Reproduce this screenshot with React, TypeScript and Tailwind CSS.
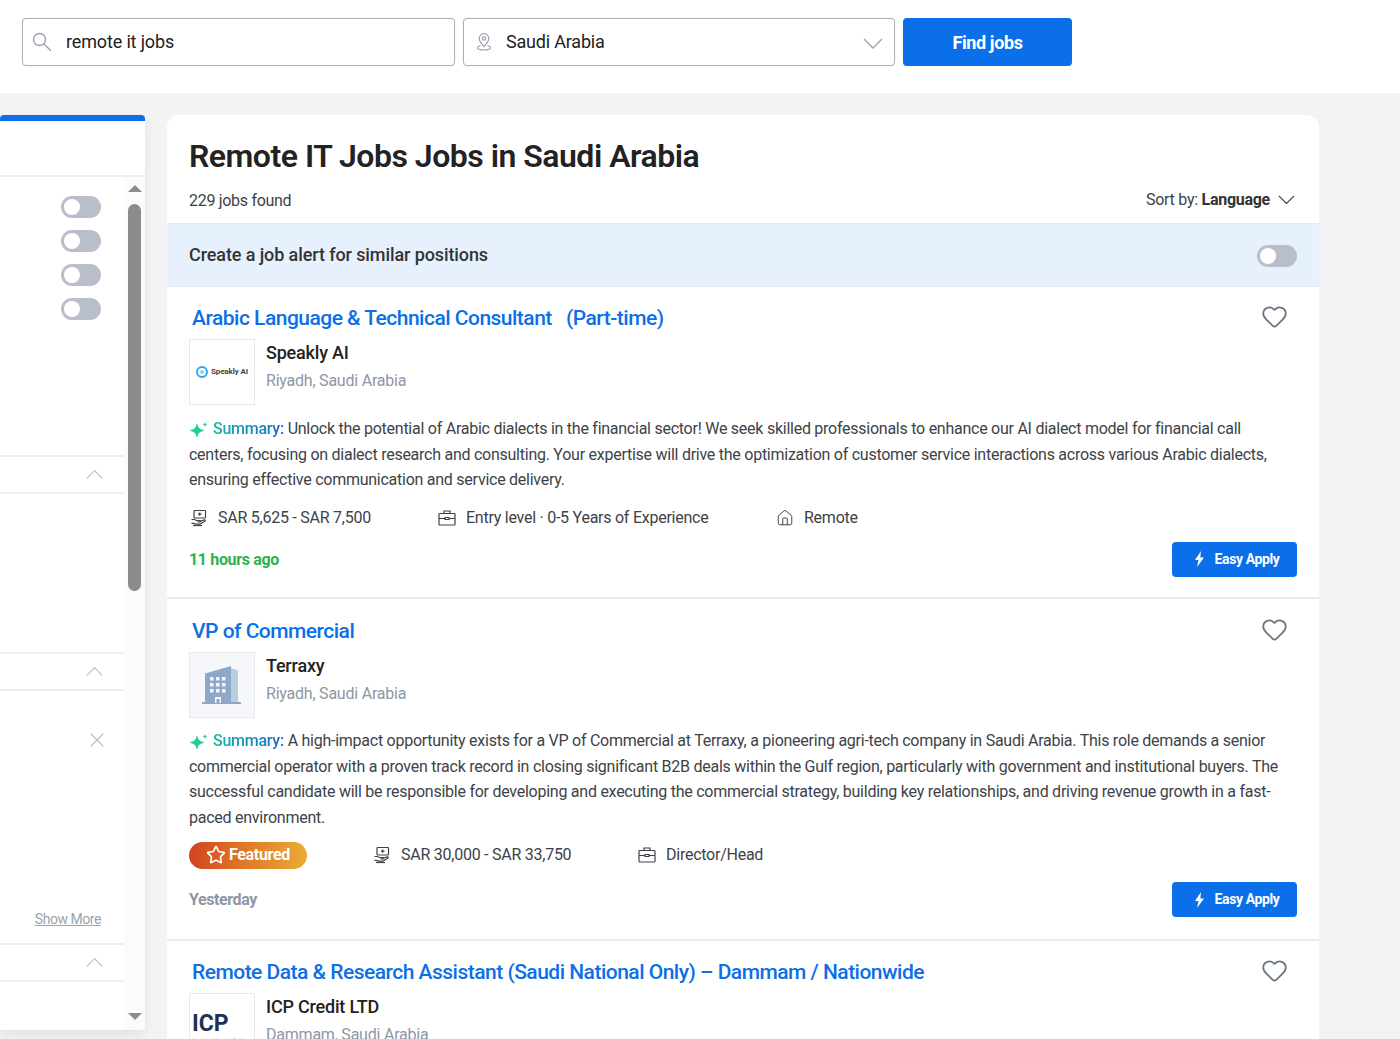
import { Heart, House, Star, X } from "lucide-react";

const font = { fontFamily: "Roboto, sans-serif" };

function Toggle({ className }: { className?: string }) {
  return (
    <div className={`flex h-[22px] w-10 items-center rounded-full bg-[#b8bfcb] px-[3px] ${className ?? ""}`}>
      <div className="h-4 w-4 rounded-full bg-white" />
    </div>
  );
}

function Chevron({ up, width, className }: { up?: boolean; width: number; className?: string }) {
  return (
    <svg width={width} height={width * 0.6} viewBox="0 0 20 12" fill="none" stroke="currentColor" strokeWidth="1.4" className={className}>
      <path d={up ? "M1 11L10 2l9 9" : "M1 1l9 9 9-9"} />
    </svg>
  );
}

function SearchIcon() {
  return (
    <svg width="20" height="20" viewBox="0 0 20 20" fill="none" stroke="#9aa3ae" strokeWidth="1.4" className="shrink-0">
      <circle cx="7.5" cy="7.5" r="6" />
      <path d="M11.800 11.800l7 7" />
    </svg>
  );
}

function MoneyIcon() {
  return (
    <svg width="18" height="18" viewBox="0 0 18 18" fill="none" stroke="#3d4248" strokeWidth="1.2" className="shrink-0">
      <rect x="4" y="1.5" width="11.5" height="7.5" rx="0.8" />
      <path d="M8 5.2h3.500M9.700 3.600v3.200" />
      <path d="M1.500 10.500h3l2 1h3.500c.8 0 .8 1.400 0 1.400H7.500" />
      <path d="M10.500 12.300l3.500-1.400c1.200-.4 1.700.8.700 1.400l-4.700 2.900H5.500l-1.500-.8H1.500" />
      <path d="M3 16.500h9" />
    </svg>
  );
}

function CaseIcon() {
  return (
    <svg width="18" height="18" viewBox="0 0 18 18" fill="none" stroke="#3d4248" strokeWidth="1.2" className="shrink-0">
      <rect x="1" y="4.500" width="16" height="11.500" rx="0.8" />
      <path d="M6 4.500V2h6v2.500" />
      <path d="M1 9.500h6M11 9.500h6M7 8.500h4v2H7z" />
    </svg>
  );
}

function PinIcon() {
  return (
    <svg width="18" height="20" viewBox="0 0 18 20" fill="none" stroke="#9aa3ae" strokeWidth="1.2">
      <path d="M9 14.500c-2.800-3-4.800-5.300-4.800-8a4.800 4.800 0 0 1 9.600 0c0 2.700-2 5-4.800 8z" />
      <circle cx="9" cy="6.500" r="1.700" />
      <path d="M5.500 13.500c-2 .5-3 1.300-3 2.300 0 1.300 2.900 2.200 6.500 2.200s6.500-.9 6.500-2.200c0-1-1-1.800-3-2.300" />
    </svg>
  );
}

function Sparkle() {
  return (
    <svg width="20" height="17" viewBox="0 0 20 17" className="mr-[4px] inline-block align-[-4px]">
      <path d="M8 3.500c.7 3.600 2.400 5.300 6.500 6-4.100.7-5.800 2.400-6.500 6-.7-3.600-2.400-5.300-6.500-6 4.100-.7 5.800-2.400 6.500-6z" fill="#1fcf8f" stroke="#1fcf8f" strokeWidth="1" strokeLinejoin="round" />
      <path d="M16 1c.3 1.500 1 2.200 2.500 2.500-1.500.3-2.200 1-2.500 2.500-.3-1.500-1-2.200-2.500-2.500 1.500-.3 2.200-1 2.500-2.500z" fill="#1fcf8f" />
    </svg>
  );
}

function BoltIcon() {
  return (
    <svg width="11" height="16" viewBox="0 0 11 16" fill="white">
      <path d="M7 0L1 9h3.500L3 16l7-9.500H6.300z" />
    </svg>
  );
}

function BuildingIcon() {
  return (
    <svg width="40" height="40" viewBox="0 0 40 40">
      <path d="M29 3l7 2.500V37h-7z" fill="#bccde0" />
      <path d="M3 37V8.500L29 1v36h10v2H0v-2z" fill="#8ea9c7" />
      <g fill="#f4f6fa">
        <rect x="8" y="12" width="3.500" height="3.500" /><rect x="14" y="12" width="3.500" height="3.500" /><rect x="20" y="12" width="3.500" height="3.500" />
        <rect x="8" y="18" width="3.500" height="3.500" /><rect x="14" y="18" width="3.500" height="3.500" /><rect x="20" y="18" width="3.500" height="3.500" />
        <rect x="8" y="24" width="3.500" height="3.500" /><rect x="14" y="24" width="3.500" height="3.500" /><rect x="20" y="24" width="3.500" height="3.500" />
        <rect x="13" y="32" width="6" height="6" />
      </g>
      <rect x="14.500" y="34" width="3" height="4" fill="#8ea9c7" />
    </svg>
  );
}

function SpeaklyLogo() {
  return (
    <div className="flex items-center gap-[3px]">
      <div className="flex h-3 w-3 items-center justify-center rounded-full border-[2px] border-[#2ea7ee]">
        <div className="h-1 w-1 rounded-full bg-[#8fd0f6]" />
      </div>
      <span className="text-[8px] font-bold tracking-[-0.1px] text-[#444]">Speakly AI</span>
    </div>
  );
}

function IcpLogo() {
  return (
    <div className="flex w-full flex-col pl-[2px]">
      <span className="text-[23px] font-bold leading-[26px] text-[#1f2f55]">ICP</span>
      <span className="whitespace-nowrap text-[4px] leading-[5px] text-[#d4a72c]">International Company Profile</span>
    </div>
  );
}

function Meta({ icon, children }: { icon: React.ReactNode; children: React.ReactNode }) {
  return (
    <div className="flex items-center gap-[10px] text-[16px] tracking-[-0.25px] text-[#3d4248]">
      {icon}
      <span>{children}</span>
    </div>
  );
}

function SummaryText({ lines, className }: { lines: string[]; className: string }) {
  return (
    <p className={`text-[16px] leading-[25.5px] tracking-[-0.255px] text-[#3d4248] ${className}`}>
      <Sparkle />
      <span className="bg-gradient-to-r from-[#1fb5a0] to-[#1d63d0] bg-clip-text font-medium text-transparent">Summary:</span>{" "}
      {lines.map((l, i) => (
        <span key={i} className={i === 0 ? "inline whitespace-nowrap" : "block whitespace-nowrap"}>{l}</span>
      ))}
    </p>
  );
}

function EasyApply() {
  return (
    <button className="flex h-[35px] w-[125px] items-center justify-center gap-[10px] rounded-[4px] bg-[#0a6fe8] pl-[4px] text-[14px] font-bold tracking-[-0.4px] text-white">
      <BoltIcon />
      Easy Apply
    </button>
  );
}

function JobHead({ title, logo, name, place, muted }: { title: string; logo: React.ReactNode; name: string; place: string; muted?: boolean }) {
  return (
    <>
      <div className="flex items-start justify-between">
        <h2 className="whitespace-pre pl-[3px] text-[21px] font-medium leading-[28px] tracking-[-0.51px] text-[#0a6fe8]">{title}</h2>
        <Heart size={27} strokeWidth={1.6} className="mr-[9px] mt-[-1px] text-[#6c7681]" />
      </div>
      <div className="mt-[7px] flex gap-[11px]">
        <div className={`flex h-[66px] w-[66px] shrink-0 items-center justify-center overflow-hidden border border-[#e6e9f0] ${muted ? "bg-[#f5f7fa]" : "bg-white"}`}>
          {logo}
        </div>
        <div>
          <div className="text-[18px] font-medium leading-[28px] tracking-[-0.2px] text-[#222]">{name}</div>
          <div className="text-[16px] leading-[27px] tracking-[-0.22px] text-[#8d97a5]">{place}</div>
        </div>
      </div>
    </>
  );
}

export default function App() {
  return (
    <div className="h-[1039px] overflow-hidden bg-[#f3f3f3]" style={font}>
      <header className="flex h-[93px] items-start gap-2 bg-white pl-[22px] pt-[18px]">
        <div className="flex h-[48px] w-[433px] items-center rounded-[4px] border border-[#aab2bc] pl-[9px] shadow-[0_0_1px_rgba(0,0,0,0.3)]">
          <SearchIcon />
          <span className="mb-[2px] ml-[14px] text-[18px] tracking-[-0.15px] text-[#222]">remote it jobs</span>
        </div>
        <div className="flex h-[48px] w-[432px] items-center rounded-[4px] border border-[#aab2bc] pl-[11px] pr-[11px] shadow-[0_0_1px_rgba(0,0,0,0.3)]">
          <PinIcon />
          <span className="mb-[2px] ml-[13px] text-[18px] tracking-[-0.2px] text-[#222]">Saudi Arabia</span>
          <Chevron width={20} className="ml-auto mt-[4px] text-[#9aa3ae]" />
        </div>
        <button className="h-[48px] w-[169px] rounded-[4px] bg-[#0a6fe8] text-[18px] font-bold tracking-[-0.4px] text-white">Find jobs</button>
      </header>

      <div className="flex items-start gap-[22px] pt-[22px]">
        <aside className="flex h-[915px] w-[145px] shrink-0 flex-col overflow-hidden rounded-t-[4px] border-t-[6px] border-[#0a6fe8] bg-white shadow-[0_4px_12px_rgba(0,0,0,0.08)]">
          <div className="h-[56px] shrink-0 border-b-2 border-[#ececf2]" />
          <div className="flex min-h-0 flex-1">
            <div className="w-[124px] shrink-0 text-[#b9c0cb]">
              <div className="flex h-[278px] flex-col gap-3 pl-[61px] pt-[19px]">
                <Toggle />
                <Toggle />
                <Toggle />
                <Toggle />
              </div>
              <div className="flex h-[39px] items-center justify-end border-y-2 border-[#ececf2] pr-[21px]">
                <Chevron up width={17} />
              </div>
              <div className="h-[158px]" />
              <div className="flex h-[39px] items-center justify-end border-y-2 border-[#ececf2] pr-[21px]">
                <Chevron up width={17} />
              </div>
              <div className="flex h-[252px] flex-col items-end pr-[21px]">
                <X size={24} strokeWidth={1.2} className="mr-[-6px] mt-[37px]" />
                <span className="mr-[2px] mt-[157px] text-[14px] tracking-[-0.45px] text-[#9aa3ae] underline">Show More</span>
              </div>
              <div className="flex h-[39px] items-center justify-end border-y-2 border-[#ececf2] pr-[21px]">
                <Chevron up width={17} />
              </div>
            </div>
            <div className="flex w-[21px] flex-col items-center bg-[#fbfbfb] pb-[10px] pt-[8px]">
              <div className="h-0 w-0 border-x-[7px] border-b-[7px] border-x-transparent border-b-[#8c8c8c]" />
              <div className="mt-[12px] h-[387px] w-[13px] rounded-full bg-[#8c8c8c]" />
              <div className="mt-auto h-0 w-0 border-x-[7px] border-t-[7px] border-x-transparent border-t-[#8c8c8c]" />
            </div>
          </div>
        </aside>

        <main className="w-[1152px] shrink-0 overflow-hidden rounded-t-[12px] bg-white">
          <div className="h-[108px] px-[22px] pt-[20px]">
            <h1 className="text-[32px] font-semibold leading-[42px] tracking-[-0.5px] text-[#222]">Remote IT Jobs Jobs in Saudi Arabia</h1>
            <div className="mt-[11px] flex items-center justify-between">
              <span className="text-[16px] tracking-[-0.3px] text-[#3d4248]">229 jobs found</span>
              <div className="mb-[2px] flex items-center gap-[8px] pr-[2px] text-[16px] tracking-[-0.27px] text-[#3d4248]">
                <span>Sort by: <b className="font-bold text-[#333]">Language</b></span>
                <Chevron width={17} className="text-[#3d4248]" />
              </div>
            </div>
          </div>

          <div className="flex h-[64px] items-center justify-between border-y border-[#e6e9f0] bg-[#e6f1fd] pl-[22px] pr-[22px]">
            <span className="mb-[1px] text-[18px] font-medium tracking-[-0.1px] text-[#333]">Create a job alert for similar positions</span>
            <Toggle className="mt-[2px]" />
          </div>

          <article className="h-[312px] border-b-2 border-[#ececf0] px-[22px] pt-[17px]">
            <JobHead
              title="Arabic Language & Technical Consultant   (Part-time)"
              logo={<SpeaklyLogo />}
              name="Speakly AI"
              place="Riyadh, Saudi Arabia"
            />
            <SummaryText
              className="mt-[11px]"
              lines={[
                "Unlock the potential of Arabic dialects in the financial sector! We seek skilled professionals to enhance our AI dialect model for financial call",
                "centers, focusing on dialect research and consulting. Your expertise will drive the optimization of customer service interactions across various Arabic dialects,",
                "ensuring effective communication and service delivery.",
              ]}
            />
            <div className="mt-[12px] flex h-[26px] items-center">
              <div className="w-[249px] pl-[1px]">
                <Meta icon={<MoneyIcon />}>SAR 5,625 - SAR 7,500</Meta>
              </div>
              <div className="w-[338px]">
                <Meta icon={<CaseIcon />}>Entry level · 0-5 Years of Experience</Meta>
              </div>
              <Meta icon={<House size={18} strokeWidth={1.3} />}>Remote</Meta>
            </div>
            <div className="mt-[11px] flex items-center justify-between">
              <span className="pt-[1px] text-[16px] font-bold tracking-[-0.35px] text-[#2eb24b]">11 hours ago</span>
              <EasyApply />
            </div>
          </article>

          <article className="h-[342px] border-b-2 border-[#ececf0] px-[22px] pt-[18px]">
            <JobHead
              title="VP of Commercial"
              logo={<BuildingIcon />}
              name="Terraxy"
              place="Riyadh, Saudi Arabia"
              muted
            />
            <SummaryText
              className="mt-[10px]"
              lines={[
                "A high-impact opportunity exists for a VP of Commercial at Terraxy, a pioneering agri-tech company in Saudi Arabia. This role demands a senior",
                "commercial operator with a proven track record in closing significant B2B deals within the Gulf region, particularly with government and institutional buyers. The",
                "successful candidate will be responsible for developing and executing the commercial strategy, building key relationships, and driving revenue growth in a fast-",
                "paced environment.",
              ]}
            />
            <div className="mt-[12px] flex h-[26px] items-center">
              <div className="flex h-[27px] w-[118px] items-center justify-center gap-[3px] rounded-full bg-gradient-to-r from-[#d2421f] to-[#e9ac34] text-[16px] font-bold tracking-[-0.3px] text-white">
                <Star size={20} strokeWidth={2} />
                Featured
              </div>
              <div className="ml-[66px] w-[265px]">
                <Meta icon={<MoneyIcon />}>SAR 30,000 - SAR 33,750</Meta>
              </div>
              <Meta icon={<CaseIcon />}>Director/Head</Meta>
            </div>
            <div className="mt-[14px] flex items-center justify-between">
              <span className="text-[16px] font-bold tracking-[-0.4px] text-[#8d97a5]">Yesterday</span>
              <EasyApply />
            </div>
          </article>

          <article className="px-[22px] pt-[17px]">
            <JobHead
              title="Remote Data & Research Assistant (Saudi National Only) – Dammam / Nationwide"
              logo={<IcpLogo />}
              name="ICP Credit LTD"
              place="Dammam, Saudi Arabia"
            />
          </article>
        </main>
      </div>
    </div>
  );
}
